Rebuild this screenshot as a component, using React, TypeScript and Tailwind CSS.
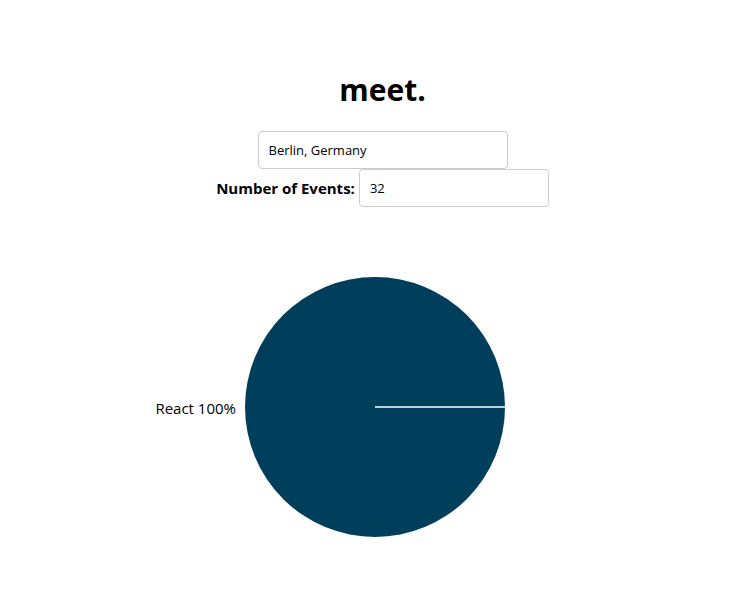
import React from 'react';

const App: React.FC = () => {
  return (
    <div className="min-h-screen bg-white text-black font-['Open_Sans',sans-serif]">
      <div className="pl-[10px] text-center">
        <h1 className="pt-[70px] text-[30px] font-bold leading-[40px]">meet.</h1>
        <div className="mt-[21px] flex justify-center">
          <input
            type="text"
            defaultValue="Berlin, Germany"
            className="h-[38px] w-[250px] rounded-[4px] border border-[#ccc] px-[10px] text-[13px] outline-none"
          />
        </div>
        <div className="flex items-center justify-center gap-[4px]">
          <label className="text-[15px] font-bold">Number of Events:</label>
          <input
            type="number"
            defaultValue={32}
            className="h-[38px] w-[190px] rounded-[4px] border border-[#ccc] px-[10px] text-[13px] outline-none"
          />
        </div>
      </div>

      {/* Pie chart */}
      <svg className="mt-[30px] block" width="755" height="340" viewBox="0 0 755 340">
        <circle cx="375" cy="170" r="130" fill="#003f5c" />
        <line x1="375" y1="170" x2="505" y2="170" stroke="#fff" strokeWidth="1.5" />
        <text x="236" y="177" textAnchor="end" fontSize="15" fill="#000" fontFamily="Open Sans, sans-serif">
          React 100%
        </text>
      </svg>
    </div>
  );
};

export default App;
